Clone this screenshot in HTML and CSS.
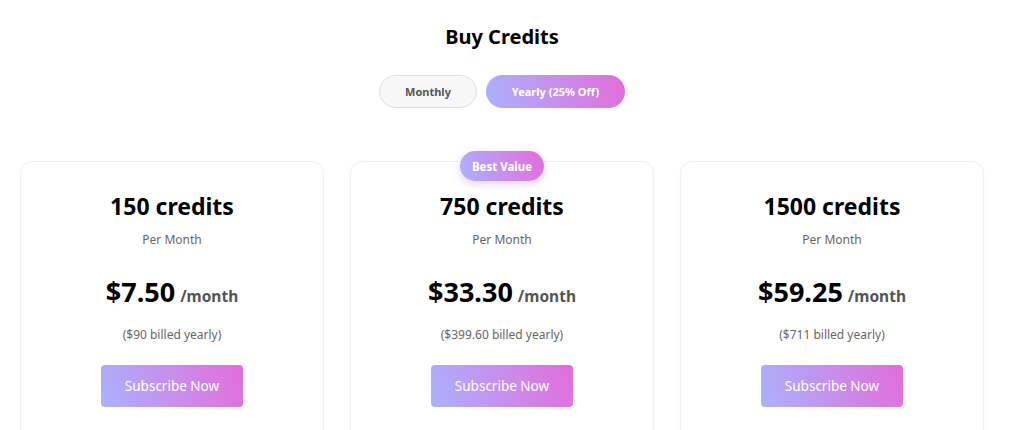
FILE: index.html
```html
<!DOCTYPE html>
<html>
<head>
<meta charset="utf-8">
<link rel="stylesheet" href="styles.css">
</head>
<body>
<div class="page">
  <h1 class="title">Buy Credits</h1>
  <div class="toggle">
    <button class="tog tog-off">Monthly</button>
    <button class="tog tog-on">Yearly (25% Off)</button>
  </div>
  <div class="cards">
    <div class="card">
      <div class="credits">150 credits</div>
      <div class="per">Per Month</div>
      <div class="price"><span class="amt">$7.50</span> <span class="unit">/month</span></div>
      <div class="billed">($90 billed yearly)</div>
      <button class="sub">Subscribe Now</button>
    </div>
    <div class="card">
      <div class="badge">Best Value</div>
      <div class="credits">750 credits</div>
      <div class="per">Per Month</div>
      <div class="price"><span class="amt">$33.30</span> <span class="unit">/month</span></div>
      <div class="billed">($399.60 billed yearly)</div>
      <button class="sub">Subscribe Now</button>
    </div>
    <div class="card">
      <div class="credits">1500 credits</div>
      <div class="per">Per Month</div>
      <div class="price"><span class="amt">$59.25</span> <span class="unit">/month</span></div>
      <div class="billed">($711 billed yearly)</div>
      <button class="sub">Subscribe Now</button>
    </div>
  </div>
</div>
</body>
</html>
```
FILE: styles.css
```css
* { box-sizing: border-box; }
html, body { margin: 0; padding: 0; background: #fff; overflow: hidden; }
body { font-family: "Noto Sans", "Open Sans", sans-serif; color: #000; }
.page { padding: 22px 40px 0 20px; }
.title { margin: 0; text-align: center; font-size: 20px; font-weight: 700; line-height: 30px; }
.toggle { display: flex; justify-content: center; gap: 9px; margin-top: 23px; }
.tog { height: 33px; border-radius: 17px; font-family: inherit; font-size: 11px; font-weight: 700; padding: 0; }
.tog-off { width: 98px; background: #f7f7f7; border: 1px solid #dedede; color: #555; }
.tog-on { width: 139px; border: none; color: #fff; background: linear-gradient(70deg, #aab2fd, #e36cdb); }
.cards { display: grid; grid-template-columns: repeat(3, 304px); gap: 26px; margin-top: 53px; }
.card { position: relative; border: 1px solid #f0f0f0; border-radius: 12px; height: 300px; display: flex; flex-direction: column; align-items: center; padding-top: 29px; box-shadow: 0 1px 3px rgba(0,0,0,0.03); }
.badge { position: absolute; top: -11px; left: 50%; transform: translateX(-50%); width: 84px; height: 30px; border-radius: 15px; background: linear-gradient(70deg, #aab2fd, #e36cdb); color: #fff; font-size: 11.5px; font-weight: 700; display: flex; align-items: center; justify-content: center; box-shadow: 0 3px 8px rgba(180,120,230,0.35); }
.credits { font-size: 23px; font-weight: 700; line-height: 30px; }
.per { margin-top: 11px; font-size: 12px; color: #666; line-height: 16px; }
.price { margin-top: 24px; line-height: 40px; display: flex; align-items: baseline; gap: 5px; }
.amt { font-size: 27px; font-weight: 700; }
.unit { font-size: 15.5px; font-weight: 700; color: #555; }
.billed { margin-top: 11px; font-size: 12px; color: #666; line-height: 16px; }
.sub { margin-top: 22px; width: 142px; height: 42px; border: none; border-radius: 4px; background: linear-gradient(70deg, #aab2fd, #e36cdb); color: #fff; font-family: inherit; font-size: 13.5px; font-weight: 400; }
```
